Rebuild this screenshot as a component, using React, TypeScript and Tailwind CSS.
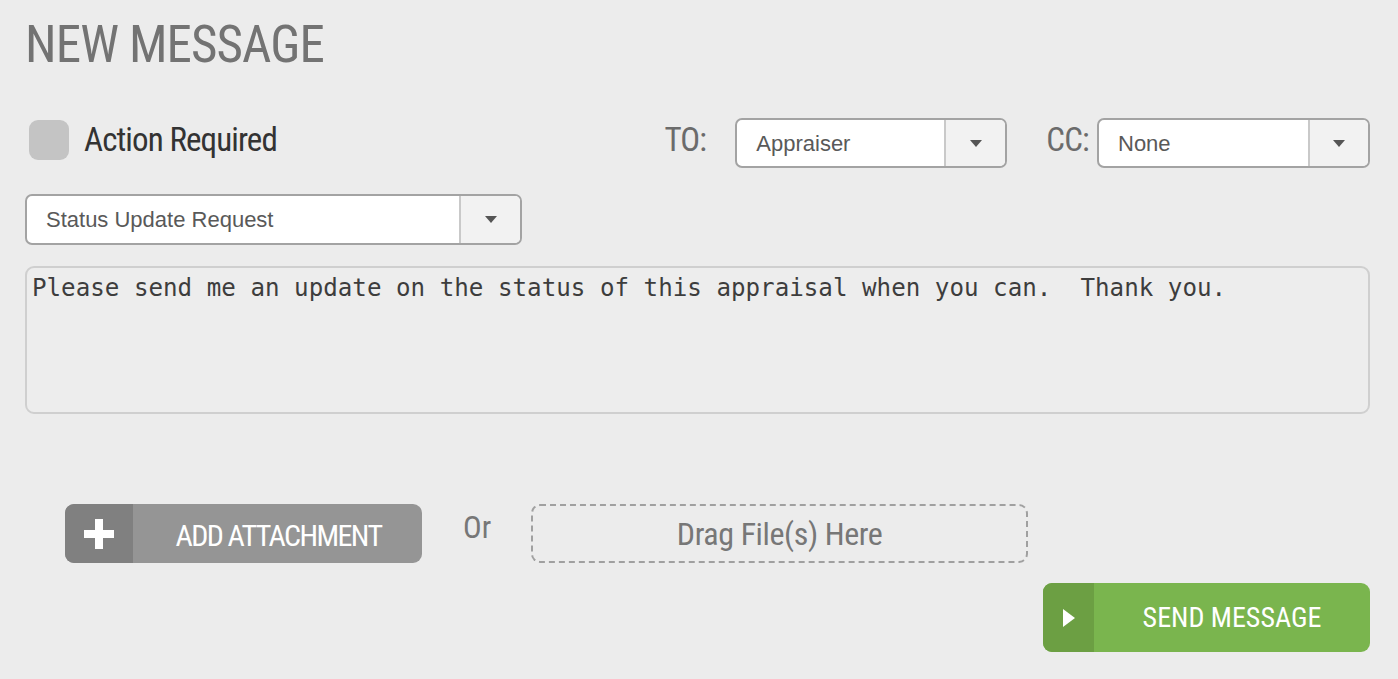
import React from "react";

const cond = { fontFamily: "Roboto, 'Liberation Sans', sans-serif", fontStretch: "condensed" } as React.CSSProperties;

function Caret() {
  return (
    <svg width="12" height="7" viewBox="0 0 12 7">
      <path d="M0 0 L12 0 L6 7 Z" fill="#555" />
    </svg>
  );
}

function Select({ value, className, arrowW }: { value: string; className: string; arrowW: string }) {
  return (
    <div className={`flex h-full rounded-[7px] border-2 border-[#a3a3a3] bg-white overflow-hidden ${className}`}>
      <div className="flex-1 flex items-center pl-[19px] text-[22px] text-[#595959] font-['Liberation_Sans',Arial,sans-serif]">
        {value}
      </div>
      <div className={`${arrowW} border-l-2 border-[#c9c9c9] bg-[#f2f2f2] flex items-center justify-center`}>
        <Caret />
      </div>
    </div>
  );
}

export default function App() {
  return (
    <div className="w-[1398px] h-[679px] bg-[#ececec] pl-[25px] pr-[28px] pt-[19px] overflow-hidden">
      <h1 className="text-[51px] leading-[52px] tracking-[-0.9px] text-[#737373] font-['Roboto',sans-serif]" style={{ fontStretch: "condensed" }}>
        NEW MESSAGE
      </h1>
      <div className="mt-[47px] flex items-center h-[50px]">
        <div className="flex items-center mb-[7px] pl-[4px]">
          <div className="w-[40px] h-[40px] rounded-[9px] bg-[#c4c4c4]" />
          <span className="ml-[15px] text-[33px] tracking-[-0.9px] text-[#333333]" style={cond}>Action Required</span>
        </div>
        <div className="flex-1" />
        <span className="text-[33px] tracking-[-0.8px] text-[#6b6b6b] mb-[7px]" style={cond}>TO:</span>
        <Select value="Appraiser" className="ml-[29px] w-[272px]" arrowW="w-[61px]" />
        <span className="ml-[39px] text-[33px] tracking-[-0.8px] text-[#6b6b6b] mb-[7px]" style={cond}>CC:</span>
        <Select value="None" className="ml-[8px] w-[273px]" arrowW="w-[60px]" />
      </div>
      <div className="mt-[26px] h-[51px]">
        <Select value="Status Update Request" className="w-[497px]" arrowW="w-[61px]" />
      </div>
      <div className="mt-[21px] h-[148px] rounded-[9px] border-2 border-[#cfcfcf] bg-[#ededed] px-[5px] pt-[2px] font-['DejaVu_Sans_Mono',monospace] text-[24.2px] text-[#3d3d3d] whitespace-pre">
        {"Please send me an update on the status of this appraisal when you can.  Thank you."}
      </div>
      <div className="mt-[90px] flex items-center pl-[40px] h-[59px]">
        <div className="flex h-[59px] w-[357px] rounded-[9px] overflow-hidden bg-[#959595]">
          <div className="w-[68px] bg-[#808080] flex items-center justify-center">
            <svg width="30" height="30" viewBox="0 0 30 30">
              <rect x="11" y="0" width="8" height="30" fill="#fff" />
              <rect x="0" y="11" width="30" height="8" fill="#fff" />
            </svg>
          </div>
          <div className="flex-1 flex items-center justify-center text-white text-[30px] tracking-[-1.6px] pt-[3px] pl-[2px]" style={cond}>
            ADD ATTACHMENT
          </div>
        </div>
        <span className="ml-[41px] text-[31px] text-[#777777] mb-[11px]" style={cond}>Or</span>
        <div className="ml-[40px] w-[497px] h-[59px] rounded-[9px] border-2 border-dashed border-[#a0a0a0] flex items-center justify-center text-[32px] tracking-[-0.4px] text-[#777777]" style={cond}>
          Drag File(s) Here
        </div>
      </div>
      <div className="mt-[20px] flex justify-end">
        <div className="flex h-[69px] w-[327px] rounded-[9px] overflow-hidden bg-[#7ab54e]">
          <div className="w-[51px] bg-[#6c9f43] flex items-center justify-center">
            <svg width="12" height="18" viewBox="0 0 12 18">
              <path d="M0 0 L12 9 L0 18 Z" fill="#fff" />
            </svg>
          </div>
          <div className="flex-1 flex items-center justify-center text-white text-[28px]" style={cond}>
            SEND MESSAGE
          </div>
        </div>
      </div>
    </div>
  );
}
